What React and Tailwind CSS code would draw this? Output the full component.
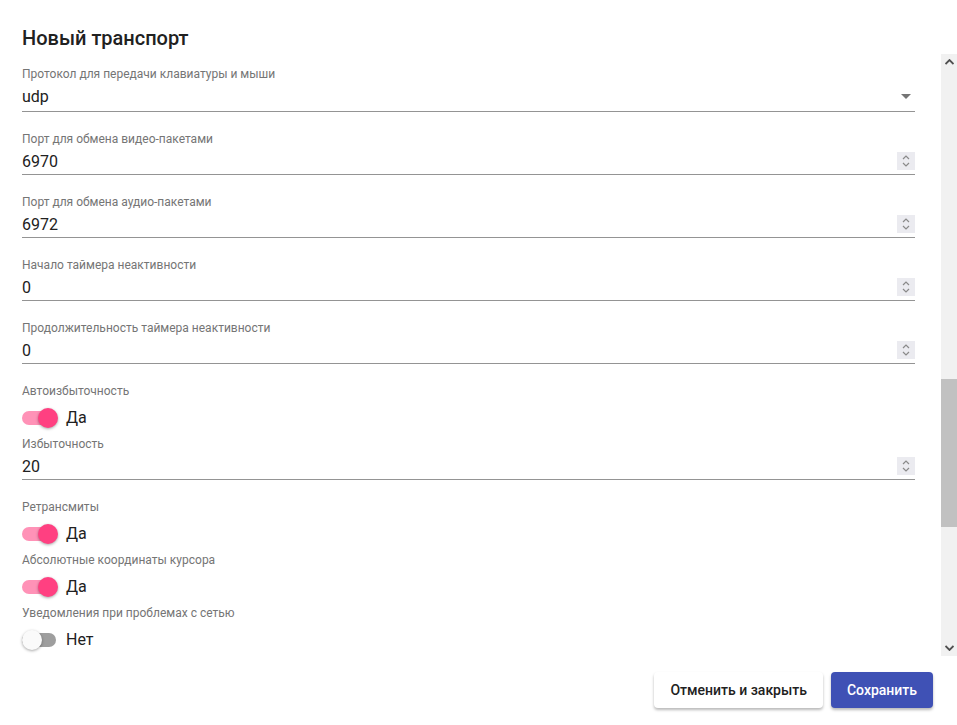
import React from "react";

const font = { fontFamily: "Roboto, 'Noto Sans', sans-serif" };

function Label({ children }) {
  return (
    <div className="text-[12px] leading-[16px] text-[#757575] whitespace-nowrap">{children}</div>
  );
}

function Spinner() {
  return (
    <div className="w-[18px] h-[18px] bg-[#ebebf0] flex items-center justify-center">
      <svg width="10" height="14" viewBox="0 0 10 14" fill="none" stroke="#8a8a8a" strokeWidth="1.2">
        <path d="M2 5 L5 2 L8 5" />
        <path d="M2 9 L5 12 L8 9" />
      </svg>
    </div>
  );
}

function NumberField({ label, value, mt = "mt-[19px]" }) {
  return (
    <div className={mt}>
      <Label>{label}</Label>
      <div className="h-[28px] border-b border-[#949494] flex items-center justify-between">
        <span className="text-[16px] text-[#212121] leading-[20px] pt-[2px]">{value}</span>
        <Spinner />
      </div>
    </div>
  );
}

function Toggle({ on }) {
  return (
    <div className="h-[37px] flex items-center">
      <div className="relative w-[36px] h-[20px] flex items-center">
        <div
          className={
            "w-[34px] h-[14px] rounded-full " + (on ? "bg-[#ff92b7]" : "bg-[#9e9e9e]")
          }
        />
        <div
          className={
            "absolute top-0 w-[20px] h-[20px] rounded-full shadow-[0_1px_3px_rgba(0,0,0,0.35)] " +
            (on ? "left-[16px] bg-[#ff4081]" : "left-0 bg-[#fafafa]")
          }
        />
      </div>
      <span className="ml-[8px] text-[16px] text-[#212121]">{on ? "Да" : "Нет"}</span>
    </div>
  );
}

function Scrollbar() {
  return (
    <div className="w-[16px] bg-[#f1f1f1] flex flex-col">
      <div className="h-[16px] flex items-center justify-center">
        <svg width="9" height="6" viewBox="0 0 9 6">
          <path d="M0.5 5 L4.5 1 L8.5 5" fill="none" stroke="#505050" strokeWidth="1.8" />
        </svg>
      </div>
      <div className="flex-1 flex flex-col">
        <div className="h-[309px]" />
        <div className="h-[148px] bg-[#c1c1c1]" />
        <div className="flex-1" />
      </div>
      <div className="h-[16px] flex items-center justify-center">
        <svg width="9" height="6" viewBox="0 0 9 6">
          <path d="M0.5 1 L4.5 5 L8.5 1" fill="none" stroke="#505050" strokeWidth="1.8" />
        </svg>
      </div>
    </div>
  );
}

export default function App() {
  return (
    <div className="w-[957px] h-[725px] bg-white flex flex-col overflow-hidden" style={font}>
      <div className="pt-[24px] px-[22px] h-[54px]">
        <h2 className="text-[20px] leading-[28px] font-medium text-[#212121]">Новый транспорт</h2>
      </div>

      <div className="h-[602px] flex">
        <div className="flex-1 overflow-hidden pl-[22px] pr-[26px] pt-[12px]">
          <div>
            <Label>Протокол для передачи клавиатуры и мыши</Label>
            <div className="h-[30px] border-b border-[#949494] flex items-center justify-between">
              <span className="text-[16px] text-[#212121] leading-[20px]">udp</span>
              <svg width="10" height="5" viewBox="0 0 10 5" className="mr-[4px]">
                <path d="M0 0 L10 0 L5 5 Z" fill="#757575" />
              </svg>
            </div>
          </div>
          <NumberField label="Порт для обмена видео-пакетами" value="6970" />
          <NumberField label="Порт для обмена аудио-пакетами" value="6972" />
          <NumberField label="Начало таймера неактивности" value="0" />
          <NumberField label="Продолжительность таймера неактивности" value="0" />

          <div className="mt-[19px]">
            <Label>Автоизбыточность</Label>
            <Toggle on />
          </div>
          <NumberField label="Избыточность" value="20" mt="mt-0" />

          <div className="mt-[19px]">
            <Label>Ретрансмиты</Label>
            <Toggle on />
            <Label>Абсолютные координаты курсора</Label>
            <Toggle on />
            <Label>Уведомления при проблемах с сетью</Label>
            <Toggle on={false} />
          </div>
        </div>
        <Scrollbar />
      </div>

      <div className="flex justify-end gap-[8px] pr-[24px] pt-[16px]">
        <button className="h-[36px] px-[16px] rounded-[4px] bg-white text-[14px] font-medium text-[#212121] shadow-[0_2px_3px_rgba(0,0,0,0.28)]">
          Отменить и закрыть
        </button>
        <button className="h-[36px] px-[16px] rounded-[4px] bg-[#3f51b5] text-[14px] font-medium text-white shadow-[0_2px_3px_rgba(0,0,0,0.28)]">
          Сохранить
        </button>
      </div>
    </div>
  );
}
